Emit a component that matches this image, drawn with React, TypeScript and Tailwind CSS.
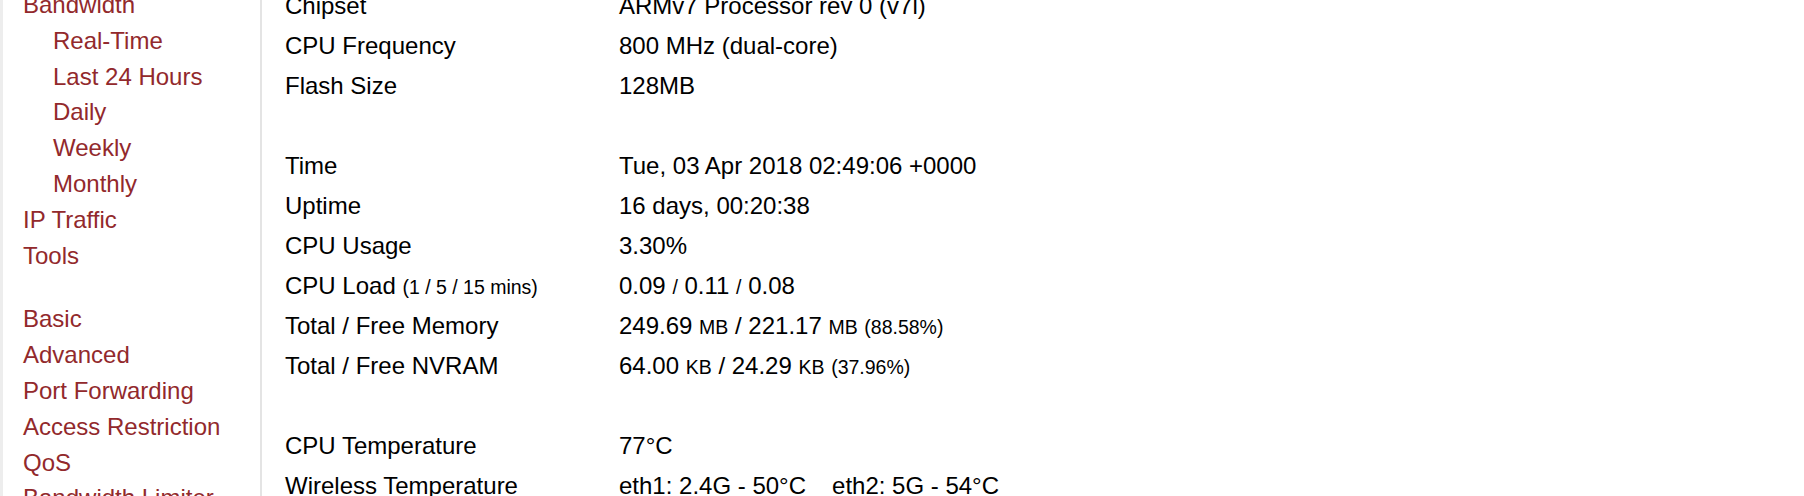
import React from "react";

const red = "text-[#92292c]";

function NavItem({ label, sub }: { label: string; sub?: boolean }) {
  return (
    <div className={`${red} ${sub ? "pl-[30px]" : ""} leading-[35.8px] whitespace-nowrap`}>
      <a href="#" className="no-underline">{label}</a>
    </div>
  );
}

function Row({ label, children }: { label: React.ReactNode; children?: React.ReactNode }) {
  return (
    <div className="grid grid-cols-[334px_1fr] h-[40px] leading-[40px] whitespace-nowrap">
      <div>{label}</div>
      <div>{children}</div>
    </div>
  );
}

const Small = ({ children }: { children: React.ReactNode }) => (
  <span className="text-[19.5px]">{children}</span>
);

export default function App() {
  return (
    <div
      className="flex h-[496px] w-[1804px] overflow-hidden bg-white text-[24px] text-black"
      style={{ fontFamily: '"Liberation Sans", Arial, Helvetica, sans-serif' }}
    >
      <div className="w-[3px] shrink-0 bg-[#ededed]" />
      <div className="w-[259px] shrink-0 border-r-[2px] border-[#e4e4e4] bg-white pl-[20px]">
        <div className="mt-[-13px]">
          <NavItem label="Bandwidth" />
          <NavItem label="Real-Time" sub />
          <NavItem label="Last 24 Hours" sub />
          <NavItem label="Daily" sub />
          <NavItem label="Weekly" sub />
          <NavItem label="Monthly" sub />
          <NavItem label="IP Traffic" />
          <NavItem label="Tools" />
          <div className="h-[28px]" />
          <NavItem label="Basic" />
          <NavItem label="Advanced" />
          <NavItem label="Port Forwarding" />
          <NavItem label="Access Restriction" />
          <NavItem label="QoS" />
          <NavItem label="Bandwidth Limiter" />
        </div>
      </div>
      <div className="flex-1 pl-[23px]">
        <div className="mt-[-14px]">
          <Row label="Chipset">ARMv7 Processor rev 0 (v7l)</Row>
          <Row label="CPU Frequency">800 MHz (dual-core)</Row>
          <Row label="Flash Size">128MB</Row>
          <Row label="" />
          <Row label="Time">Tue, 03 Apr 2018 02:49:06 +0000</Row>
          <Row label="Uptime">16 days, 00:20:38</Row>
          <Row label="CPU Usage">3.30%</Row>
          <Row
            label={
              <>
                CPU Load <Small>(1 / 5 / 15 mins)</Small>
              </>
            }
          >
            0.09 <Small>/</Small> 0.11 <Small>/</Small> 0.08
          </Row>
          <Row label="Total / Free Memory">
            249.69 <Small>MB</Small> / 221.17 <Small>MB</Small> <Small>(88.58%)</Small>
          </Row>
          <Row label="Total / Free NVRAM">
            64.00 <Small>KB</Small> / 24.29 <Small>KB</Small> <Small>(37.96%)</Small>
          </Row>
          <Row label="" />
          <Row label="CPU Temperature">77°C</Row>
          <Row label="Wireless Temperature">
            eth1: 2.4G - 50°C<span className="inline-block w-[26px]" />eth2: 5G - 54°C
          </Row>
        </div>
      </div>
    </div>
  );
}
